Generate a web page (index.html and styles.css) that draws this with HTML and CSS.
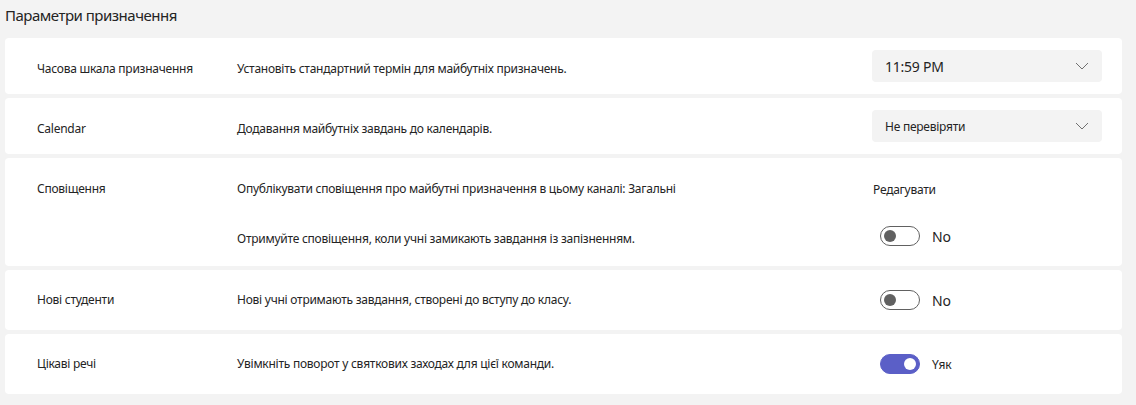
FILE: index.html
```html
<!DOCTYPE html>
<html lang="uk">
<head>
<meta charset="utf-8">
<link rel="stylesheet" href="styles.css">
</head>
<body>
<div class="page">
  <h1 class="title">Параметри призначення</h1>
  <div class="cards">
    <section class="card card-select">
      <div class="row">
        <div class="label lower">Часова шкала призначення</div>
        <div class="desc lower">Установіть стандартний термін для майбутніх призначень.</div>
        <div class="control">
          <div class="select select-time">
            <span>11:59 PM</span>
            <svg class="chev" width="14" height="8" viewBox="0 0 14 8"><path d="M1 1l6 6 6-6" fill="none" stroke="#707070" stroke-width="1"/></svg>
          </div>
        </div>
      </div>
    </section>
    <section class="card card-select">
      <div class="row">
        <div class="label lower">Calendar</div>
        <div class="desc lower">Додавання майбутніх завдань до календарів.</div>
        <div class="control">
          <div class="select select-cal">
            <span>Не перевіряти</span>
            <svg class="chev" width="14" height="8" viewBox="0 0 14 8"><path d="M1 1l6 6 6-6" fill="none" stroke="#707070" stroke-width="1"/></svg>
          </div>
        </div>
      </div>
    </section>
    <section class="card card-notify">
      <div class="row row-top">
        <div class="label">Сповіщення</div>
        <div class="desc">Опублікувати сповіщення про майбутні призначення в цьому каналі: Загальні</div>
        <div class="control"><span class="edit">Редагувати</span></div>
      </div>
      <div class="row row-second">
        <div class="label"></div>
        <div class="desc lower">Отримуйте сповіщення, коли учні замикають завдання із запізненням.</div>
        <div class="control">
          <span class="toggle"><span class="knob"></span></span>
          <span class="state">No</span>
        </div>
      </div>
    </section>
    <section class="card card-toggle">
      <div class="row">
        <div class="label">Нові студенти</div>
        <div class="desc">Нові учні отримають завдання, створені до вступу до класу.</div>
        <div class="control">
          <span class="toggle"><span class="knob"></span></span>
          <span class="state">No</span>
        </div>
      </div>
    </section>
    <section class="card card-toggle">
      <div class="row">
        <div class="label">Цікаві речі</div>
        <div class="desc">Увімкніть поворот у святкових заходах для цієї команди.</div>
        <div class="control">
          <span class="toggle on"><span class="knob"></span></span>
          <span class="state small">Yяк</span>
        </div>
      </div>
    </section>
  </div>
</div>
</body>
</html>
```

FILE: styles.css
```css
* { box-sizing: border-box; }
html, body {
  margin: 0;
  padding: 0;
  background: #f3f3f3;
  width: 1136px;
  height: 405px;
  overflow: hidden;
}
body {
  font-family: "Noto Sans", "Liberation Sans", sans-serif;
  color: #242424;
  font-size: 12px;
  letter-spacing: -0.25px;
}
.page {
  padding: 4px 14px 0 5px;
}
.title {
  margin: 0 0 12px 0;
  font-size: 15px;
  line-height: 22px;
  font-weight: 400;
  letter-spacing: -0.5px;
  color: #242424;
}
.cards {
  display: flex;
  flex-direction: column;
  gap: 4px;
}
.card {
  background: #ffffff;
  border-radius: 4px;
  padding: 12px 20px 12px 32px;
}
.row {
  display: grid;
  grid-template-columns: 200px 1fr 230px;
  align-items: center;
}
.label, .desc {
  line-height: 16px;
}
.lower { padding-top: 5px; }
.control {
  display: flex;
  align-items: center;
}
.select {
  width: 230px;
  height: 32px;
  background: #f3f3f3;
  border-radius: 4px;
  display: flex;
  align-items: center;
  justify-content: space-between;
  padding: 0 13px 0 13px;
}
.select-time span { font-size: 14px; }
.select-cal span { font-size: 12px; }
.chev { display: block; }
.card-notify { padding-bottom: 10px; }
.row-top { height: 38px; }
.row-second { height: 40px; margin-top: 8px; }
.edit { padding-left: 1px; }
.card-toggle { padding-top: 20px; padding-bottom: 20px; }
.card-toggle .row { height: 20px; }
.toggle {
  width: 40px;
  height: 20px;
  border: 1px solid #616161;
  border-radius: 10px;
  margin-left: 8px;
  display: flex;
  align-items: center;
  padding: 0 3px;
}
.knob {
  width: 12px;
  height: 12px;
  border-radius: 50%;
  background: #616161;
}
.toggle.on {
  background: #5b5fc7;
  border-color: #5b5fc7;
  justify-content: flex-end;
}
.toggle.on .knob { background: #ffffff; }
.state {
  margin-left: 12px;
  font-size: 14px;
}
.state.small { font-size: 12px; }
```
